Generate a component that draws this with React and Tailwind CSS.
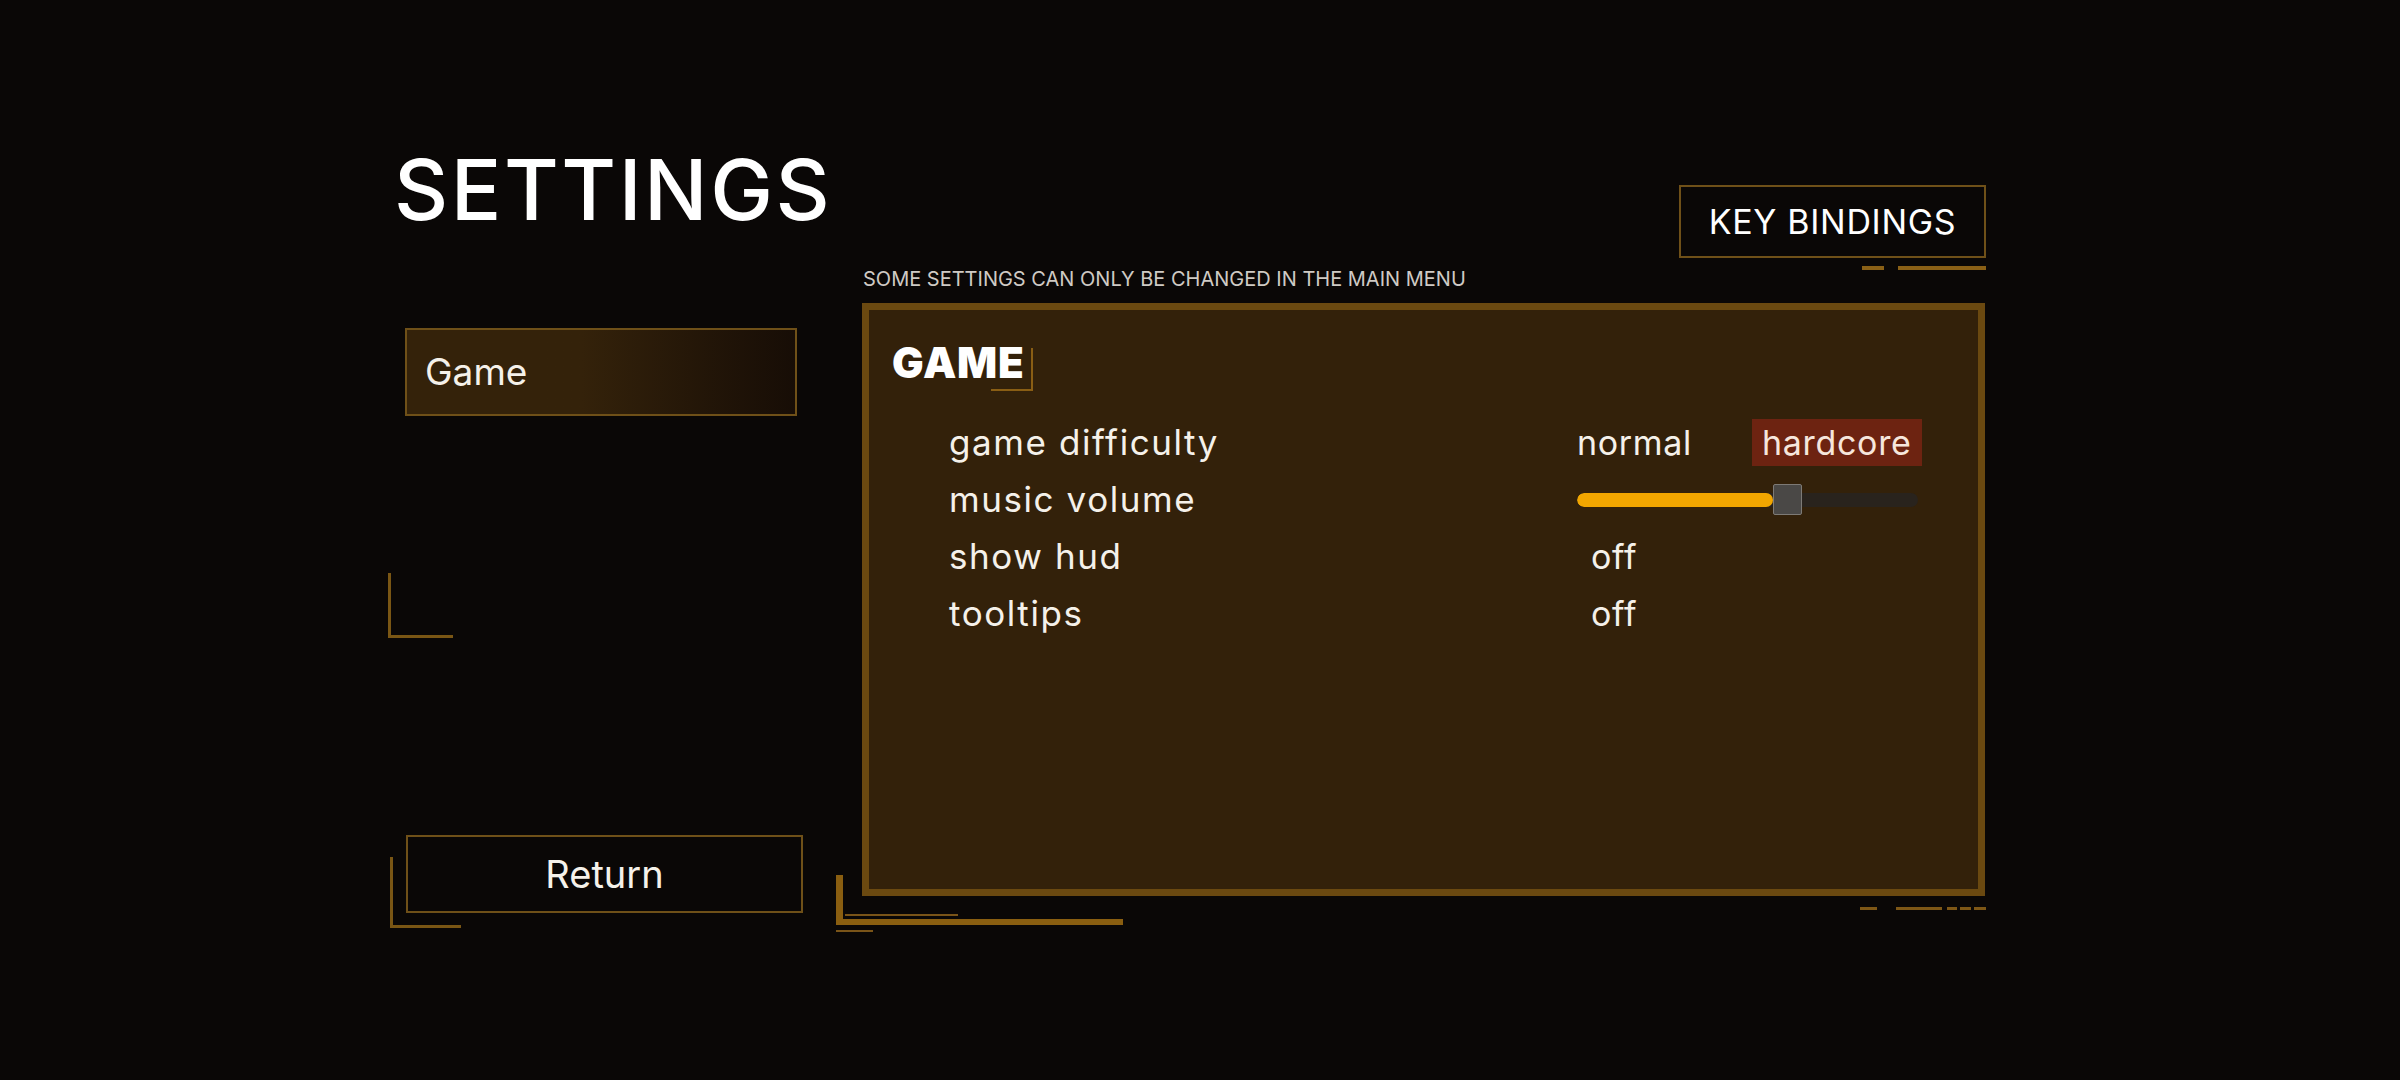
const rows = [
    { label: 'game difficulty', kind: 'choice' },
    { label: 'music volume', kind: 'slider', value: 57.5 },
    { label: 'show hud', kind: 'toggle', value: 'off' },
    { label: 'tooltips', kind: 'toggle', value: 'off' },
];

function Slider({ value }) {
    return (
        <div className="relative w-[341px] h-[31px] flex items-center">
            <div className="w-full h-[14px] rounded-full bg-[#29231d] overflow-hidden">
                <div className="h-full bg-[#f2a600] rounded-full" style={{ width: `${value}%` }} />
            </div>
            <div
                className="absolute top-0 w-[29px] h-[31px] bg-[#4a4846] border border-[#7d7a76] rounded-[2px]"
                style={{ left: `${value}%` }}
            />
        </div>
    );
}

function SettingRow({ row }) {
    return (
        <div className="flex items-center h-[57px]">
            <div className="w-[628px] text-[35px] tracking-[0.045em]">{row.label}</div>
            <div className="text-[34px] tracking-[0.02em]">
                {row.kind === 'choice' && (
                    <div className="flex items-center">
                        <span className="w-[175px]">normal</span>
                        <span className="h-[47px] px-[10px] flex items-center bg-[#6d2311] text-[#f6e6dc]">hardcore</span>
                    </div>
                )}
                {row.kind === 'slider' && <Slider value={row.value} />}
                {row.kind === 'toggle' && <span className="pl-[14px]">{row.value}</span>}
            </div>
        </div>
    );
}

export default function App() {
    return (
        <div className="w-full h-[1080px] overflow-hidden bg-[#0a0706] text-[#f5f1ea] font-[Inter,'Noto_Sans',sans-serif]">
            <div className="ml-[388px] w-[1598px] pt-[148px]">
                {/* Header */}
                <div className="flex justify-between items-start h-[119px]">
                    <h1 className="ml-[6px] text-[84px] leading-none tracking-[0.03em] font-medium text-white">SETTINGS</h1>
                    <div className="mt-[37px] flex flex-col items-end">
                        <button className="w-[307px] h-[73px] border-2 border-[#6f5018] flex items-center justify-center text-[34px] tracking-[0.02em] text-white">
                            KEY BINDINGS
                        </button>
                        <div className="mt-[8px] flex gap-[14px]">
                            <div className="w-[22px] h-[4px] bg-[#8a6016]" />
                            <div className="w-[88px] h-[4px] bg-[#8a6016]" />
                        </div>
                    </div>
                </div>

                <div className="flex">
                    {/* Left menu */}
                    <div className="w-[474px] flex flex-col">
                        <div className="mt-[61px] ml-[17px] w-[392px] h-[88px] border-2 border-[#6f5018] bg-linear-to-r from-[#34220a] from-45% to-[#170d06] flex items-center pl-[18px] text-[37px]">
                            Game
                        </div>
                        <div className="mt-[157px] w-[65px] h-[65px] border-l-[3px] border-b-[3px] border-[#7a5614]" />
                        <div className="relative mt-[197px] ml-[18px] w-[397px] h-[78px]">
                            <div className="absolute left-[-16px] top-[22px] w-[71px] h-[71px] border-l-[3px] border-b-[3px] border-[#7a5614]" />
                            <button className="w-full h-full border-2 border-[#6f5018] flex items-center justify-center text-[38px]">
                                Return
                            </button>
                        </div>
                    </div>

                    {/* Panel */}
                    <div className="flex-1">
                        <p className="ml-[1px] text-[20px] leading-[24px] text-[#cfcac4]">SOME SETTINGS CAN ONLY BE CHANGED IN THE MAIN MENU</p>
                        <div className="relative mt-[12px] w-[1123px] h-[593px]">
                            <div className="h-full border-[7px] border-[#6b4910] bg-[#33210a]">
                                <div className="pt-[32px] pl-[23px]">
                                    <h2 className="relative inline-block text-[42px] leading-none font-black tracking-[0.02em] text-white">
                                        GAME
                                        <span className="absolute right-[-8px] top-[6px] w-[42px] h-[43px] border-r-2 border-b-2 border-[#8a5e14]" />
                                    </h2>
                                </div>
                                <div className="mt-[30px] pl-[80px]">
                                    {rows.map((row) => (
                                        <SettingRow key={row.label} row={row} />
                                    ))}
                                </div>
                            </div>

                            {/* Bottom-left trim */}
                            <div className="absolute left-[-26px] top-[572px] w-[7px] h-[50px] bg-[#8a5e10]" />
                            <div className="absolute left-[-26px] top-[616px] w-[287px] h-[6px] bg-[#8a5e10]" />
                            <div className="absolute left-[-17px] top-[611px] w-[113px] h-[2px] bg-[#7a5418]" />
                            <div className="absolute left-[-26px] top-[627px] w-[37px] h-[2px] bg-[#7a5418]" />

                            {/* Bottom-right dashes */}
                            <div className="absolute right-[-1px] top-[604px] flex gap-[3px]">
                                <div className="w-[17px] h-[3px] bg-[#7e5716] mr-[16px]" />
                                <div className="w-[46px] h-[3px] bg-[#7e5716] mr-[2px]" />
                                <div className="w-[10px] h-[3px] bg-[#7e5716]" />
                                <div className="w-[11px] h-[3px] bg-[#7e5716]" />
                                <div className="w-[12px] h-[3px] bg-[#7e5716]" />
                            </div>
                        </div>
                    </div>
                </div>
            </div>
        </div>
    );
}
